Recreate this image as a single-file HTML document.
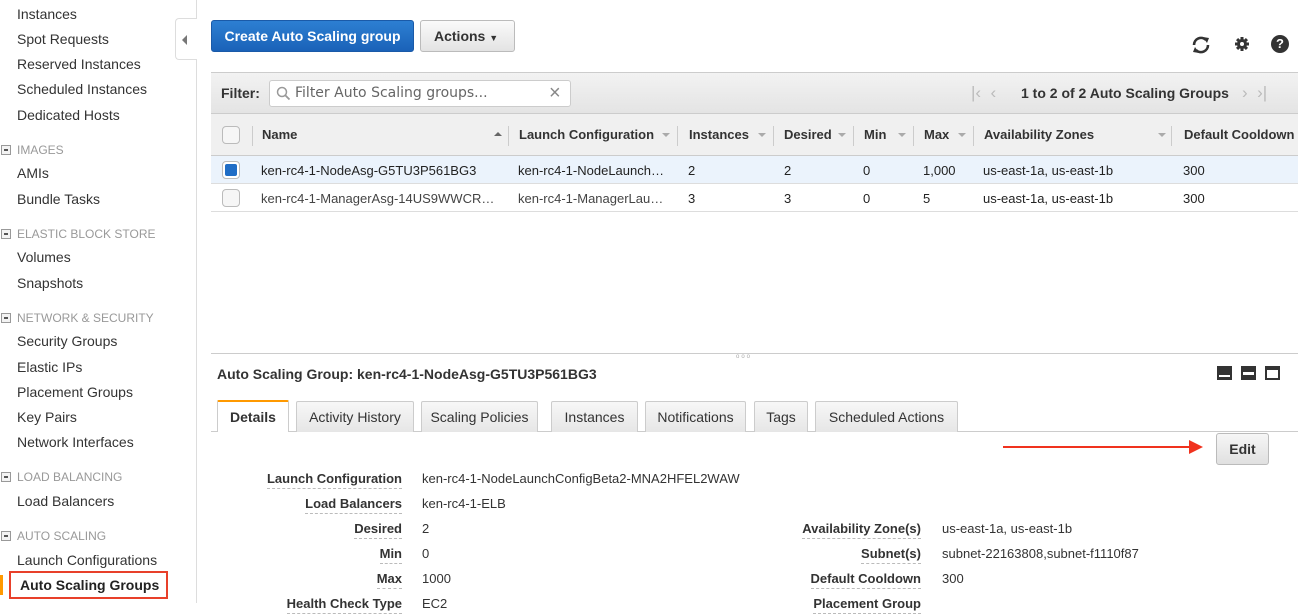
<!DOCTYPE html>
<html><head><meta charset="utf-8"><style>
*{margin:0;padding:0;box-sizing:border-box}
body{width:1298px;height:603px;overflow:hidden;background:#fff;font-family:"Liberation Sans",Arial,sans-serif;color:#222;position:relative;font-size:14px}
.a{position:absolute;white-space:nowrap}
.si{position:absolute;left:17px;font-size:14px;color:#333}
.sh{position:absolute;left:17px;font-size:12px;color:#999}
.mi{position:absolute;left:1px;width:10px;height:10px;border:1px solid #999;background:#f3f3f3}
.mi:after{content:"";position:absolute;left:2px;top:3px;width:4px;height:2px;background:#555}
.th{position:absolute;top:114px;height:42px;line-height:42px;font-weight:bold;font-size:13px;color:#333}
.sep{position:absolute;top:126px;width:1px;height:20px;background:#ccc}
.car{position:absolute;top:133px;width:0;height:0;border-left:4px solid transparent;border-right:4px solid transparent;border-top:4px solid #aaa}
.td{position:absolute;font-size:13px;color:#222}
.tab{position:absolute;top:401px;height:31px;line-height:31px;border:1px solid #ccc;border-bottom:none;background:linear-gradient(#f7f7f7,#e6e6e6);font-size:14px;color:#333;text-align:center;border-radius:2px 2px 0 0}
.lbl{position:absolute;font-weight:bold;font-size:13px;color:#333;text-align:right;border-bottom:1px dashed #bbb;padding-bottom:2px}
.val{position:absolute;font-size:13px;color:#333}
.cb{position:absolute;width:18px;height:18px;border:1px solid #bbb;border-radius:4px;background:#f6f6f6}
</style></head><body>
<!-- sidebar -->
<div class="si" style="top:6px">Instances</div>
<div class="si" style="top:31px">Spot Requests</div>
<div class="si" style="top:56px">Reserved Instances</div>
<div class="si" style="top:81px">Scheduled Instances</div>
<div class="si" style="top:107px">Dedicated Hosts</div>
<div class="mi" style="top:145px"></div><div class="sh" style="top:143px">IMAGES</div>
<div class="si" style="top:165px">AMIs</div>
<div class="si" style="top:191px">Bundle Tasks</div>
<div class="mi" style="top:229px"></div><div class="sh" style="top:227px">ELASTIC BLOCK STORE</div>
<div class="si" style="top:249px">Volumes</div>
<div class="si" style="top:275px">Snapshots</div>
<div class="mi" style="top:313px"></div><div class="sh" style="top:311px">NETWORK &amp; SECURITY</div>
<div class="si" style="top:333px">Security Groups</div>
<div class="si" style="top:359px">Elastic IPs</div>
<div class="si" style="top:384px">Placement Groups</div>
<div class="si" style="top:409px">Key Pairs</div>
<div class="si" style="top:434px">Network Interfaces</div>
<div class="mi" style="top:472px"></div><div class="sh" style="top:470px">LOAD BALANCING</div>
<div class="si" style="top:493px">Load Balancers</div>
<div class="mi" style="top:531px"></div><div class="sh" style="top:529px">AUTO SCALING</div>
<div class="si" style="top:552px">Launch Configurations</div>
<div class="a" style="left:0;top:575px;width:3px;height:20px;background:#f90"></div>
<div class="a" style="left:9px;top:571px;width:159px;height:28px;border:2px solid #e8402a"></div>
<div class="si" style="top:577px;left:20px;font-weight:bold;color:#222">Auto Scaling Groups</div>
<div class="a" style="left:196px;top:0;width:1px;height:603px;background:#ddd"></div>
<div class="a" style="left:175px;top:18px;width:22px;height:42px;background:#fff;border:1px solid #ddd;border-right:none;border-radius:4px 0 0 4px"></div>
<div class="a" style="left:182px;top:35px;border-top:5px solid transparent;border-bottom:5px solid transparent;border-right:5px solid #777"></div>
<!-- top buttons -->
<div class="a" style="left:211px;top:20px;width:203px;height:32px;background:linear-gradient(#2d7fd2,#1a62b8);border:1px solid #1a5aa8;border-radius:3px;color:#fff;font-weight:bold;font-size:14px;line-height:30px;text-align:center">Create Auto Scaling group</div>
<div class="a" style="left:420px;top:20px;width:95px;height:32px;background:linear-gradient(#fafafa,#e3e3e3);border:1px solid #bbb;border-radius:3px;color:#333;font-weight:bold;font-size:14px;line-height:30px;padding-left:13px">Actions <span style="font-size:9px;font-weight:normal">&#9660;</span></div>
<svg class="a" style="left:1190px;top:34px" width="22" height="22" viewBox="0 0 22 22"><path d="M4 11a7 7 0 0 1 12-5" fill="none" stroke="#333" stroke-width="2.6"/><path d="M18 11a7 7 0 0 1-12 5" fill="none" stroke="#333" stroke-width="2.6"/><path d="M13 3l6 1-2 5z" fill="#333"/><path d="M9 19l-6-1 2-5z" fill="#333"/></svg>
<svg class="a" style="left:1234px;top:36px" width="16" height="16" viewBox="0 0 16 16"><g fill="#333"><circle cx="8" cy="8" r="5"/><rect x="6.5" y="1" width="3" height="14"/><rect x="1" y="6.5" width="14" height="3"/><rect x="6.5" y="1" width="3" height="14" transform="rotate(45 8 8)"/><rect x="6.5" y="1" width="3" height="14" transform="rotate(-45 8 8)"/></g><circle cx="8" cy="8" r="2" fill="#fff"/></svg>
<div class="a" style="left:1271px;top:35px;width:18px;height:18px;border-radius:50%;background:#333;color:#fff;font-weight:bold;font-size:13px;text-align:center;line-height:18px">?</div>
<!-- filter bar -->
<div class="a" style="left:211px;top:72px;width:1087px;height:42px;background:linear-gradient(#f2f2f2,#e4e4e4);border-top:1px solid #ccc;border-bottom:1px solid #ccc"></div>
<div class="a" style="left:221px;top:85px;font-weight:bold;font-size:14px;color:#333">Filter:</div>
<div class="a" style="left:269px;top:80px;width:302px;height:27px;background:#fff;border:1px solid #ccc;border-radius:3px"></div>
<svg class="a" style="left:276px;top:86px" width="16" height="16" viewBox="0 0 16 16"><circle cx="6" cy="6" r="4.5" fill="none" stroke="#999" stroke-width="1.5"/><path d="M9.5 9.5l4 4" stroke="#999" stroke-width="1.8"/></svg>
<div class="a" style="left:295px;top:85px;font-family:'DejaVu Sans',sans-serif;font-size:14px;color:#666">Filter Auto Scaling groups...</div>
<div class="a" style="left:549px;top:82px;font-size:20px;color:#888">×</div>
<div class="a" style="left:971px;top:83px;font-size:17px;color:#bbb">|&lsaquo;&nbsp;&nbsp;&lsaquo;</div>
<div class="a" style="left:1021px;top:85px;font-weight:bold;font-size:14px;color:#333">1 to 2 of 2 Auto Scaling Groups</div>
<div class="a" style="left:1242px;top:83px;font-size:17px;color:#bbb">&rsaquo;&nbsp;&nbsp;&rsaquo;|</div>
<!-- header row -->
<div class="a" style="left:211px;top:114px;width:1087px;height:42px;background:#f0f0f0;border-bottom:1px solid #ccc"></div>
<div class="cb" style="left:222px;top:126px"></div>
<div class="sep" style="left:252px"></div>
<div class="th" style="left:262px">Name</div><div class="a" style="left:494px;top:132px;border-left:4px solid transparent;border-right:4px solid transparent;border-bottom:4px solid #666"></div>
<div class="sep" style="left:508px"></div>
<div class="th" style="left:519px">Launch Configuration</div><div class="car" style="left:662px"></div>
<div class="sep" style="left:677px"></div>
<div class="th" style="left:689px">Instances</div><div class="car" style="left:758px"></div>
<div class="sep" style="left:773px"></div>
<div class="th" style="left:784px">Desired</div><div class="car" style="left:838px"></div>
<div class="sep" style="left:853px"></div>
<div class="th" style="left:864px">Min</div><div class="car" style="left:898px"></div>
<div class="sep" style="left:913px"></div>
<div class="th" style="left:924px">Max</div><div class="car" style="left:958px"></div>
<div class="sep" style="left:973px"></div>
<div class="th" style="left:984px">Availability Zones</div><div class="car" style="left:1158px"></div>
<div class="sep" style="left:1171px"></div>
<div class="th" style="left:1184px">Default Cooldown</div>
<!-- rows -->
<div class="a" style="left:211px;top:156px;width:1087px;height:28px;background:#ebf3fc;border-bottom:1px solid #ddd"></div>
<div class="a" style="left:211px;top:184px;width:1087px;height:28px;border-bottom:1px solid #ddd"></div>
<div class="cb" style="left:222px;top:161px;background:#fff"></div><div class="a" style="left:225px;top:164px;width:12px;height:12px;background:#1f6dc6;border-radius:2px"></div>
<div class="cb" style="left:222px;top:189px"></div>
<div class="td" style="left:261px;top:163px">ken-rc4-1-NodeAsg-G5TU3P561BG3</div>
<div class="td" style="left:518px;top:163px">ken-rc4-1-NodeLaunch…</div>
<div class="td" style="left:688px;top:163px">2</div><div class="td" style="left:784px;top:163px">2</div><div class="td" style="left:863px;top:163px">0</div><div class="td" style="left:923px;top:163px">1,000</div>
<div class="td" style="left:983px;top:163px">us-east-1a, us-east-1b</div><div class="td" style="left:1183px;top:163px">300</div>
<div class="td" style="left:261px;top:191px;color:#444">ken-rc4-1-ManagerAsg-14US9WWCR…</div>
<div class="td" style="left:518px;top:191px;color:#444">ken-rc4-1-ManagerLau…</div>
<div class="td" style="left:688px;top:191px">3</div><div class="td" style="left:784px;top:191px">3</div><div class="td" style="left:863px;top:191px">0</div><div class="td" style="left:923px;top:191px">5</div>
<div class="td" style="left:983px;top:191px">us-east-1a, us-east-1b</div><div class="td" style="left:1183px;top:191px">300</div>
<!-- bottom pane -->
<div class="a" style="left:211px;top:353px;width:1087px;height:1px;background:#ccc"></div>
<div class="a" style="left:736px;top:354px;font-size:6px;color:#aaa;letter-spacing:2px">ooo</div>
<div class="a" style="left:217px;top:366px;font-weight:bold;font-size:14px;color:#333">Auto Scaling Group: ken-rc4-1-NodeAsg-G5TU3P561BG3</div>
<div class="a" style="left:1217px;top:366px;width:15px;height:14px;background:#333"></div><div class="a" style="left:1219px;top:375px;width:11px;height:2px;background:#fff"></div>
<div class="a" style="left:1241px;top:366px;width:15px;height:14px;background:#333"></div><div class="a" style="left:1243px;top:372px;width:11px;height:3px;background:#fff"></div>
<div class="a" style="left:1265px;top:366px;width:15px;height:14px;background:#333"></div><div class="a" style="left:1267px;top:370px;width:11px;height:8px;background:#fff"></div>
<div class="a" style="left:211px;top:431px;width:1087px;height:1px;background:#ccc"></div>
<div class="tab" style="left:217px;top:400px;width:72px;height:32px;background:#fff;border-top:2px solid #f90;font-weight:bold">Details</div>
<div class="tab" style="left:296px;width:118px">Activity History</div>
<div class="tab" style="left:421px;width:117px">Scaling Policies</div>
<div class="tab" style="left:551px;width:87px">Instances</div>
<div class="tab" style="left:645px;width:101px">Notifications</div>
<div class="tab" style="left:754px;width:54px">Tags</div>
<div class="tab" style="left:815px;width:143px">Scheduled Actions</div>
<div class="a" style="left:1003px;top:446px;width:190px;height:2px;background:#f0321e"></div>
<div class="a" style="left:1189px;top:440px;border-top:7px solid transparent;border-bottom:7px solid transparent;border-left:14px solid #f0321e"></div>
<div class="a" style="left:1216px;top:433px;width:53px;height:32px;background:linear-gradient(#f6f6f6,#e0e0e0);border:1px solid #bbb;border-radius:3px;text-align:center;line-height:30px;font-weight:bold;font-size:14px;color:#333">Edit</div>
<div class="lbl" style="right:896px;top:471px">Launch Configuration</div><div class="val" style="left:422px;top:471px">ken-rc4-1-NodeLaunchConfigBeta2-MNA2HFEL2WAW</div>
<div class="lbl" style="right:896px;top:496px">Load Balancers</div><div class="val" style="left:422px;top:496px">ken-rc4-1-ELB</div>
<div class="lbl" style="right:896px;top:521px">Desired</div><div class="val" style="left:422px;top:521px">2</div>
<div class="lbl" style="right:896px;top:546px">Min</div><div class="val" style="left:422px;top:546px">0</div>
<div class="lbl" style="right:896px;top:571px">Max</div><div class="val" style="left:422px;top:571px">1000</div>
<div class="lbl" style="right:896px;top:596px">Health Check Type</div><div class="val" style="left:422px;top:596px">EC2</div>
<div class="lbl" style="right:377px;top:521px">Availability Zone(s)</div><div class="val" style="left:942px;top:521px">us-east-1a, us-east-1b</div>
<div class="lbl" style="right:377px;top:546px">Subnet(s)</div><div class="val" style="left:942px;top:546px">subnet-22163808,subnet-f1110f87</div>
<div class="lbl" style="right:377px;top:571px">Default Cooldown</div><div class="val" style="left:942px;top:571px">300</div>
<div class="lbl" style="right:377px;top:596px">Placement Group</div>
</body></html>
